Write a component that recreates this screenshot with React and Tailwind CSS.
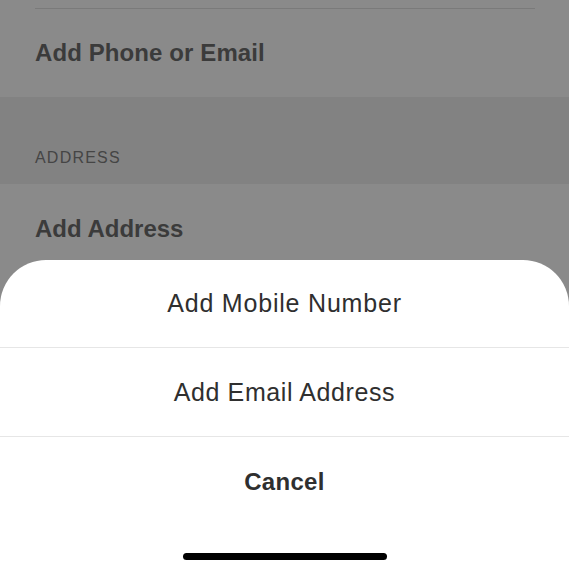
export default function App() {
  const font = { fontFamily: '"Liberation Sans", Arial, sans-serif' };
  return (
    <div className="w-[569px] h-[572px] overflow-hidden bg-[#8a8a8a] flex flex-col" style={font}>
      <div className="h-[97px] flex flex-col">
        <div className="pt-[8px] pl-[35px] pr-[34px]">
          <div className="h-px bg-[#7a7a7a]" />
        </div>
        <div className="flex-1 flex items-center pl-[35px]">
          <span className="text-[24px] font-bold tracking-[0.1px] text-[#3b3b3b] leading-none">Add Phone or Email</span>
        </div>
      </div>
      <div className="h-[87px] bg-[#828282] flex items-end pl-[35px] pb-[18px]">
        <span className="text-[16px] tracking-[1.2px] text-[#454545] leading-none">ADDRESS</span>
      </div>
      <div className="h-[76px] flex items-start pl-[35px] pt-[33px]">
        <span className="text-[24px] font-bold text-[#3b3b3b] leading-none">Add Address</span>
      </div>
      <div className="flex-1 bg-white rounded-t-[46px] flex flex-col">
        <div className="h-[88px] flex items-center justify-center border-b border-[#e6e6e6]">
          <span className="text-[25px] tracking-[0.8px] text-[#2f2f2f] leading-none">Add Mobile Number</span>
        </div>
        <div className="h-[89px] flex items-center justify-center border-b border-[#e6e6e6]">
          <span className="text-[25px] tracking-[0.6px] text-[#2f2f2f] leading-none">Add Email Address</span>
        </div>
        <div className="h-[89px] flex items-center justify-center">
          <span className="text-[24px] font-bold tracking-[0.3px] text-[#2f2f2f] leading-none">Cancel</span>
        </div>
        <div className="flex-1 flex justify-center pt-[27px]">
          <div className="w-[204px] h-[7px] rounded-full bg-black" />
        </div>
      </div>
    </div>
  );
}
